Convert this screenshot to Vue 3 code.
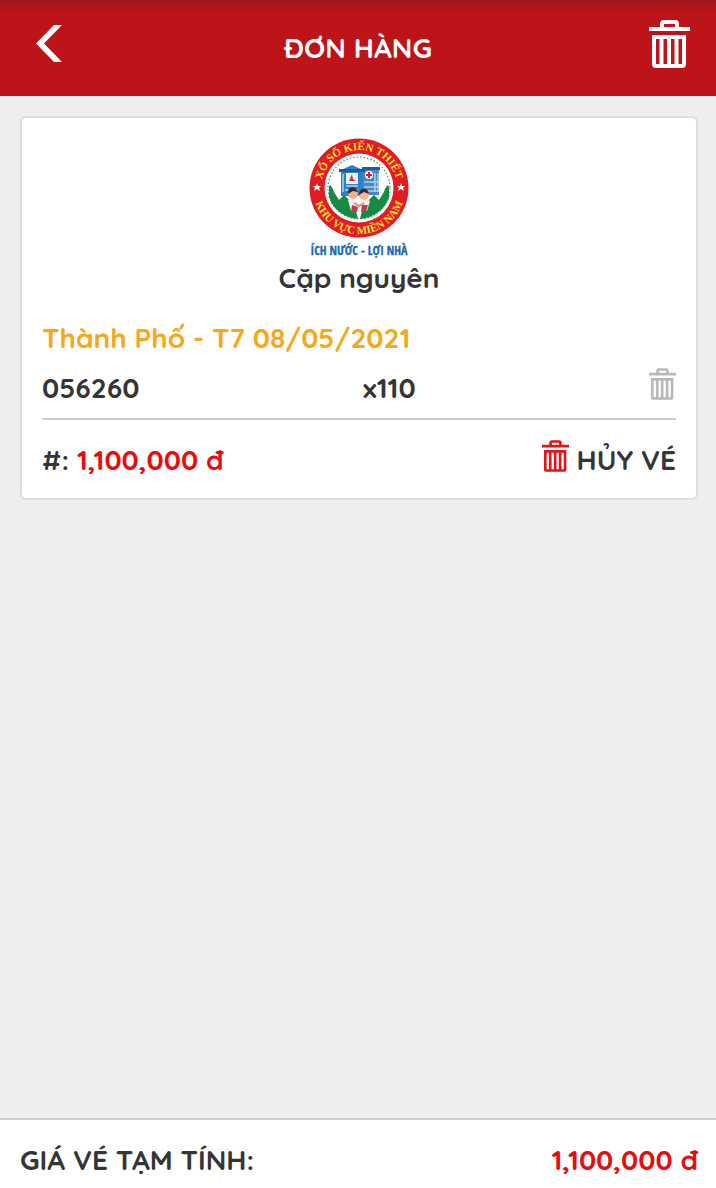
<template>
  <div class="page">
    <header class="topbar">
      <button class="icon-button back" type="button" aria-label="Quay lại">
        <svg class="back-icon" viewBox="0 0 26 38">
          <path d="M18 0H26L8 18.500L26 37H18L0 18.500Z" fill="currentColor" />
        </svg>
      </button>
      <h1>ĐƠN HÀNG</h1>
      <button class="icon-button clear" type="button" aria-label="Xóa đơn hàng">
        <svg class="trash trash-large" viewBox="0 0 41 48"><path :d="trashPath" /></svg>
      </button>
    </header>

    <main class="content">
      <article v-for="order in orders" :key="order.id" class="card">
        <svg class="logo" viewBox="0 0 100 120" role="img" aria-label="Xổ số kiến thiết">
          <defs>
            <path id="ring-top" d="M12 50A38 38 0 0 1 88 50" />
            <path id="ring-bottom" d="M4 50A46 46 0 0 0 96 50" />
          </defs>
          <circle cx="50" cy="50" r="49.500" fill="#e31b23" />
          <circle cx="50" cy="50" r="34.500" fill="#fff" />
          <circle cx="50" cy="50" r="31" fill="none" stroke="#3a9a62" stroke-width="1.200" stroke-dasharray="1.500 2" />
          <g class="ring-text">
            <text><textPath href="#ring-top" startOffset="50%">XỔ SỐ KIẾN THIẾT</textPath></text>
            <text><textPath href="#ring-bottom" startOffset="50%">KHU VỰC MIỀN NAM</textPath></text>
          </g>
          <path
            v-for="x in [8, 92]"
            :key="x"
            :transform="`translate(${x} 49)`"
            d="M0-4L1-1H4L2 1L3 4L0 2L-3 4L-2 1L-4-1H-1Z"
            fill="#fff"
          />
          <path d="M32 32L43 27L54 32V58H32Z" fill="#2b83c6" />
          <path d="M54 31H70V57H54Z" fill="#4b86c0" />
          <path d="M30 31H56V34H30ZM53 29H71V32H53Z" fill="#1a5ba3" />
          <path d="M37 35H49V46H37Z" fill="#e9f4fb" />
          <path d="M43 36L40 43H47L44 41Z" fill="#d1353c" />
          <path d="M34 36V54M37 48H49M36 52H49M66 35V54M69 35V54M55 44H70M55 49H70M55 53H70" stroke="#a9d5ed" stroke-width="1.500" />
          <circle cx="60" cy="37" r="4" fill="#fff" />
          <path d="M60 34V40M57 37H63" stroke="#e31b23" stroke-width="2" />
          <path d="M20 51C20 44 23 48 25 54L30 62L35 57C40 61 47 69 49 81C36 80 24 72 20 59Z" fill="#168b43" />
          <path d="M80 51C80 44 77 48 75 54L70 62L65 57C60 61 53 69 51 81C64 80 76 72 80 59Z" fill="#168b43" />
          <path d="M39 62L44 60L49 64L55 60L61 63L58 73H42Z" fill="#f6eef0" />
          <path d="M43 67L49 69L48 74H42ZM53 67H59L57 74H52Z" fill="#b83f52" />
          <circle cx="44" cy="56" r="5" fill="#efb18c" />
          <circle cx="55" cy="57" r="5" fill="#f2ba97" />
          <path d="M39 56C38 47 48 48 49 54L44 53ZM50 57C50 49 59 49 60 56L55 54Z" fill="#46242b" />
          <path d="M45 65L50 68L55 65" fill="none" stroke="#d9926f" stroke-width="2" />
          <text class="slogan" x="50" y="117">ÍCH NƯỚC - LỢI NHÀ</text>
        </svg>
        <h2>{{ order.type }}</h2>
        <p class="draw">{{ order.draw }}</p>

        <div v-for="ticket in order.tickets" :key="ticket.number" class="ticket">
          <span class="label">{{ ticket.number }}</span>
          <span class="label">x{{ ticket.count }}</span>
          <button class="icon-button remove" type="button" aria-label="Xóa số">
            <svg class="trash" viewBox="0 0 41 48"><path :d="trashPath" /></svg>
          </button>
        </div>

        <div class="summary">
          <span class="label">#: <strong class="price">{{ formatPrice(orderPrice(order)) }}</strong></span>
          <button class="cancel" type="button">
            <svg class="trash" viewBox="0 0 41 48"><path :d="trashPath" /></svg>
            <span class="label">HỦY VÉ</span>
          </button>
        </div>
      </article>
    </main>

    <footer class="total">
      <span>GIÁ VÉ TẠM TÍNH:</span>
      <strong class="price">{{ formatPrice(total) }}</strong>
    </footer>
  </div>
</template>

<script setup>
import { ref, computed } from 'vue';

const ticketPrice = 10000;

// handle, lid, body outline and the three bars
const trashPath = 'M13 9V4Q13 2 15 2H26Q28 2 28 4V9M0 9H41M5 17H35V44Q35 46 33 46H7Q5 46 5 44ZM12.500 17V46M20 17V46M27.500 17V46';

const orders = ref([
  {
    id: 1,
    type: 'Cặp nguyên',
    draw: 'Thành Phố - T7 08/05/2021',
    tickets: [{ number: '056260', count: 110 }],
  },
]);

const orderPrice = (order) => order.tickets.reduce((sum, ticket) => sum + ticket.count * ticketPrice, 0);

const total = computed(() => orders.value.reduce((sum, order) => sum + orderPrice(order), 0));

const formatPrice = (value) => `${value.toLocaleString('en-US')} đ`;
</script>

<style>
body {
  margin: 0;
  background: #eee;
}
</style>

<style scoped>
.page {
  display: flex;
  flex-direction: column;
  min-height: 100vh;
  color: #353535;
  font: 700 28px/32px Quicksand, Inter, sans-serif;
}

button {
  padding: 0;
  border: 0;
  background: none;
  color: inherit;
  font: inherit;
  cursor: pointer;
}

h1,
h2,
p {
  margin: 0;
  font-size: inherit;
  font-weight: inherit;
}

.topbar {
  display: grid;
  grid-template-columns: 1fr auto 1fr;
  align-items: center;
  box-sizing: border-box;
  height: 96px;
  padding: 0 26px 8px;
  background: linear-gradient(#a3151d, #bc1419 14px);
  color: #fff;
}

.topbar h1 {
  padding-top: 8px;
}

.icon-button {
  display: flex;
}

.back {
  justify-self: start;
  padding-left: 10px;
}

.clear {
  justify-self: end;
}

.back-icon {
  width: 26px;
  height: 38px;
}

.trash {
  width: 27px;
  height: 32px;
  fill: none;
  stroke: currentColor;
  stroke-width: 4;
}

.trash-large {
  width: 41px;
  height: 48px;
}

.content {
  flex: 1;
  padding: 20px 18px 20px 20px;
}

.card {
  padding: 20px;
  border: 2px solid #ddd;
  border-radius: 6px;
  background: #fff;
}

.logo {
  display: block;
  width: 100px;
  height: 120px;
  margin: 0 auto 4px;
}

.ring-text {
  fill: #fbe53c;
  font: 700 11px "Liberation Serif", serif;
  text-anchor: middle;
}

.slogan {
  fill: #1769a8;
  stroke: #1769a8;
  stroke-width: 0.3;
  font: 700 12px "Liberation Sans Narrow", "Open Sans Condensed", "DejaVu Sans Condensed", sans-serif;
  text-anchor: middle;
}

.card h2 {
  text-align: center;
}

.draw {
  margin-top: 28px;
  color: #f3a81e;
}

.label {
  padding-top: 4px;
}

.ticket {
  display: grid;
  grid-template-columns: 50% 1fr auto;
  column-gap: 4px;
  align-items: start;
  margin-top: 14px;
  padding-bottom: 14px;
  border-bottom: 2px solid #ccc;
}

.remove {
  color: #b8b8b8;
}

.summary {
  display: flex;
  align-items: start;
  justify-content: space-between;
  padding: 20px 0 2px;
}

.cancel {
  display: flex;
  align-items: start;
  gap: 8px;
}

.cancel .trash {
  color: #e01515;
}

.price {
  color: #e80d0d;
}

.total {
  display: flex;
  align-items: center;
  justify-content: space-between;
  padding: 24px 18px 12px 20px;
  border-top: 2px solid #ccc;
  background: #fff;
}
</style>
